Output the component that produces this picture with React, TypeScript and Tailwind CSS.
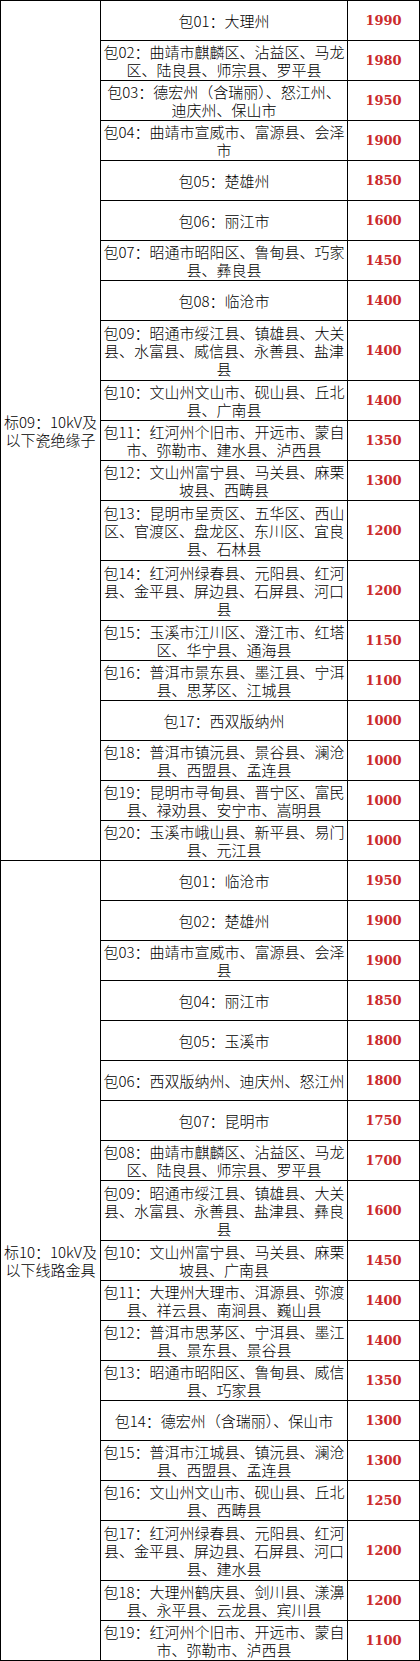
type PackageRow = {
  lines: string[]
  price: number
}

type Lot = {
  label: string[]
  rows: PackageRow[]
}

const LOTS: Lot[] = [
  {
    label: ['标09：10kV及', '以下瓷绝缘子'],
    rows: [
      { lines: ['包01：大理州'], price: 1990 },
      { lines: ['包02：曲靖市麒麟区、沾益区、马龙', '区、陆良县、师宗县、罗平县'], price: 1980 },
      { lines: ['包03：德宏州（含瑞丽）、怒江州、', '迪庆州、保山市'], price: 1950 },
      { lines: ['包04：曲靖市宣威市、富源县、会泽', '市'], price: 1900 },
      { lines: ['包05：楚雄州'], price: 1850 },
      { lines: ['包06：丽江市'], price: 1600 },
      { lines: ['包07：昭通市昭阳区、鲁甸县、巧家', '县、彝良县'], price: 1450 },
      { lines: ['包08：临沧市'], price: 1400 },
      { lines: ['包09：昭通市绥江县、镇雄县、大关', '县、水富县、威信县、永善县、盐津', '县'], price: 1400 },
      { lines: ['包10：文山州文山市、砚山县、丘北', '县、广南县'], price: 1400 },
      { lines: ['包11：红河州个旧市、开远市、蒙自', '市、弥勒市、建水县、泸西县'], price: 1350 },
      { lines: ['包12：文山州富宁县、马关县、麻栗', '坡县、西畴县'], price: 1300 },
      { lines: ['包13：昆明市呈贡区、五华区、西山', '区、官渡区、盘龙区、东川区、宜良', '县、石林县'], price: 1200 },
      { lines: ['包14：红河州绿春县、元阳县、红河', '县、金平县、屏边县、石屏县、河口', '县'], price: 1200 },
      { lines: ['包15：玉溪市江川区、澄江市、红塔', '区、华宁县、通海县'], price: 1150 },
      { lines: ['包16：普洱市景东县、墨江县、宁洱', '县、思茅区、江城县'], price: 1100 },
      { lines: ['包17：西双版纳州'], price: 1000 },
      { lines: ['包18：普洱市镇沅县、景谷县、澜沧', '县、西盟县、孟连县'], price: 1000 },
      { lines: ['包19：昆明市寻甸县、晋宁区、富民', '县、禄劝县、安宁市、嵩明县'], price: 1000 },
      { lines: ['包20：玉溪市峨山县、新平县、易门', '县、元江县'], price: 1000 },
    ],
  },
  {
    label: ['标10：10kV及', '以下线路金具'],
    rows: [
      { lines: ['包01：临沧市'], price: 1950 },
      { lines: ['包02：楚雄州'], price: 1900 },
      { lines: ['包03：曲靖市宣威市、富源县、会泽', '县'], price: 1900 },
      { lines: ['包04：丽江市'], price: 1850 },
      { lines: ['包05：玉溪市'], price: 1800 },
      { lines: ['包06：西双版纳州、迪庆州、怒江州'], price: 1800 },
      { lines: ['包07：昆明市'], price: 1750 },
      { lines: ['包08：曲靖市麒麟区、沾益区、马龙', '区、陆良县、师宗县、罗平县'], price: 1700 },
      { lines: ['包09：昭通市绥江县、镇雄县、大关', '县、水富县、永善县、盐津县、彝良', '县'], price: 1600 },
      { lines: ['包10：文山州富宁县、马关县、麻栗', '坡县、广南县'], price: 1450 },
      { lines: ['包11：大理州大理市、洱源县、弥渡', '县、祥云县、南涧县、巍山县'], price: 1400 },
      { lines: ['包12：普洱市思茅区、宁洱县、墨江', '县、景东县、景谷县'], price: 1400 },
      { lines: ['包13：昭通市昭阳区、鲁甸县、威信', '县、巧家县'], price: 1350 },
      { lines: ['包14：德宏州（含瑞丽）、保山市'], price: 1300 },
      { lines: ['包15：普洱市江城县、镇沅县、澜沧', '县、西盟县、孟连县'], price: 1300 },
      { lines: ['包16：文山州文山市、砚山县、丘北', '县、西畴县'], price: 1250 },
      { lines: ['包17：红河州绿春县、元阳县、红河', '县、金平县、屏边县、石屏县、河口', '县、建水县'], price: 1200 },
      { lines: ['包18：大理州鹤庆县、剑川县、漾濞', '县、永平县、云龙县、宾川县'], price: 1200 },
      { lines: ['包19：红河州个旧市、开远市、蒙自', '市、弥勒市、泸西县'], price: 1100 },
    ],
  },
]

function Lines({ lines }: { lines: string[] }) {
  return (
    <div className="flex flex-col items-center">
      {lines.map((line, i) => (
        <span key={i} className="whitespace-nowrap">
          {line}
        </span>
      ))}
    </div>
  )
}

function PriceRow({ row }: { row: PackageRow }) {
  const tall = row.lines.length > 2

  return (
    <div className={`flex border-b border-black ${tall ? 'h-[60px]' : 'h-[40px]'}`}>
      <div className="flex w-[247px] shrink-0 items-center justify-center border-r border-black">
        <Lines lines={row.lines} />
      </div>
      <div className="flex w-[72px] shrink-0 items-center justify-center border-r border-black">
        <span className="font-['DejaVu_Serif',serif] text-[13px] font-bold text-[#cc2b2b]">{row.price}</span>
      </div>
    </div>
  )
}

export default function App() {
  return (
    <div className="w-[420px] bg-white font-['Noto_Sans_CJK_SC',sans-serif] text-[15px] font-light leading-[18px] text-black">
      <div className="border-l border-t border-black">
        {LOTS.map((lot) => (
          <div key={lot.label[0]} className="flex">
            <div className="flex w-[100px] shrink-0 items-center justify-center border-b border-r border-black">
              <Lines lines={lot.label} />
            </div>
            <div className="flex flex-col">
              {lot.rows.map((row) => (
                <PriceRow key={row.lines[0]} row={row} />
              ))}
            </div>
          </div>
        ))}
      </div>
    </div>
  )
}
